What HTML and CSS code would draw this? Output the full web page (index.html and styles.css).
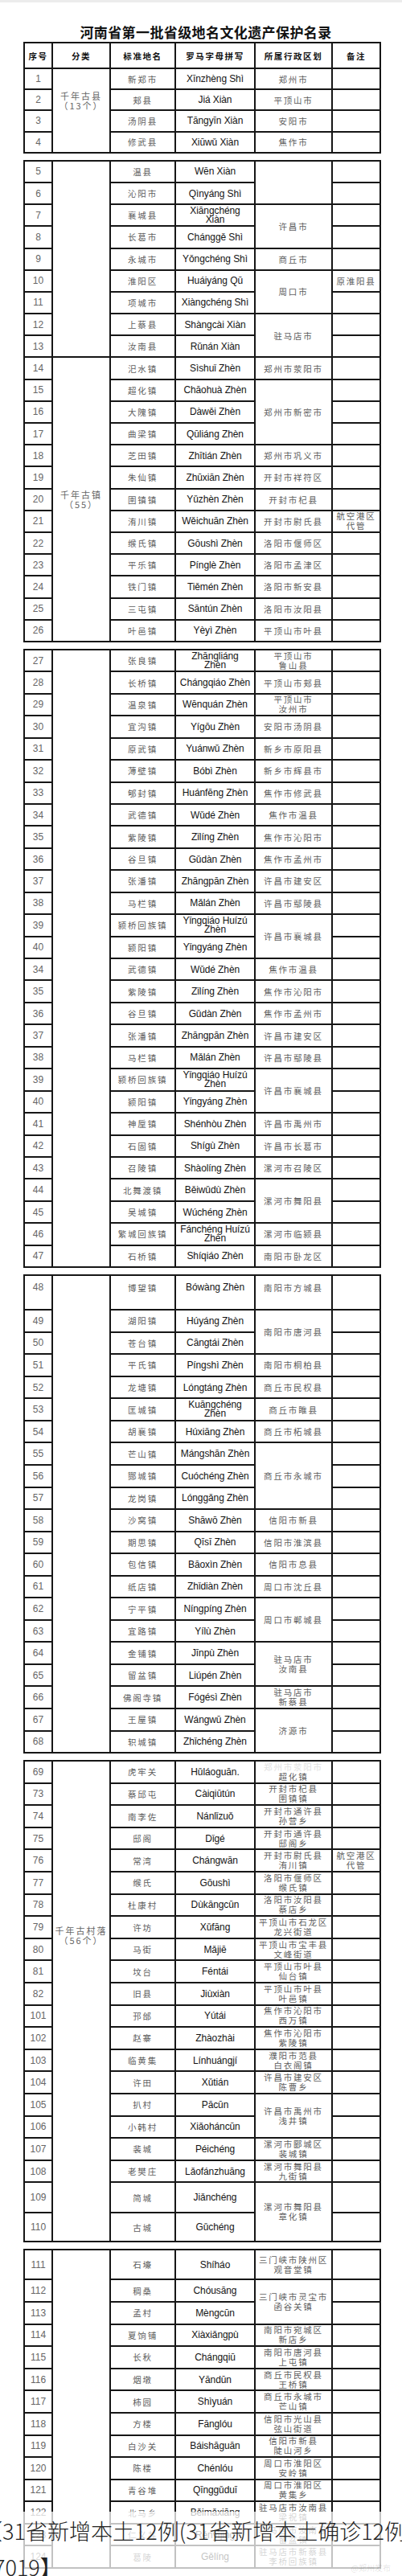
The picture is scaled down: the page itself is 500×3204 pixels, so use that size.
FILE: index.html
```html
<!DOCTYPE html>
<html lang="zh-CN">
<head>
<meta charset="utf-8">
<title>河南省第一批省级地名文化遗产保护名录</title>
<link rel="stylesheet" href="styles.css">
</head>
<body>
<div class="topbar"></div>
<h1 class="title">河南省第一批省级地名文化遗产保护名录</h1>

<table class="seg s1">
<colgroup><col class="c1"><col class="c2"><col class="c3"><col class="c4"><col class="c5"><col class="c6"></colgroup>
<tr class="head"><td>序号</td><td>分类</td><td>标准地名</td><td>罗马字母拼写</td><td>所属行政区划</td><td>备注</td></tr>
<tr><td class="n">1</td><td class="cat top1" rowspan="4">千年古县<br>（13个）</td><td class="zh">新郑市</td><td class="py">Xīnzhèng Shì</td><td class="zh">郑州市</td><td></td></tr>
<tr><td class="n">2</td><td class="zh">郏县</td><td class="py">Jiá Xiàn</td><td class="zh">平顶山市</td><td></td></tr>
<tr><td class="n">3</td><td class="zh">汤阴县</td><td class="py">Tāngyīn Xiàn</td><td class="zh">安阳市</td><td></td></tr>
<tr><td class="n">4</td><td class="zh">修武县</td><td class="py">Xiūwǔ Xiàn</td><td class="zh">焦作市</td><td></td></tr>
</table>

<table class="seg s2">
<colgroup><col class="c1"><col class="c2"><col class="c3"><col class="c4"><col class="c5"><col class="c6"></colgroup>
<tr><td class="n">5</td><td class="cat" rowspan="9"></td><td class="zh">温县</td><td class="py">Wēn Xiàn</td><td rowspan="2"></td><td></td></tr>
<tr><td class="n">6</td><td class="zh">沁阳市</td><td class="py">Qìnyáng Shì</td><td></td></tr>
<tr><td class="n">7</td><td class="zh">襄城县</td><td class="py two">Xiāngchéng<br>Xiàn</td><td class="zh" rowspan="2">许昌市</td><td></td></tr>
<tr><td class="n">8</td><td class="zh">长葛市</td><td class="py">Chánggě Shì</td><td></td></tr>
<tr><td class="n">9</td><td class="zh">永城市</td><td class="py">Yǒngchéng Shì</td><td class="zh">商丘市</td><td></td></tr>
<tr><td class="n">10</td><td class="zh">淮阳区</td><td class="py">Huáiyáng Qū</td><td class="zh" rowspan="2">周口市</td><td class="zh">原淮阳县</td></tr>
<tr><td class="n">11</td><td class="zh">项城市</td><td class="py">Xiàngchéng Shì</td><td></td></tr>
<tr><td class="n">12</td><td class="zh">上蔡县</td><td class="py">Shàngcài Xiàn</td><td class="zh" rowspan="2">驻马店市</td><td></td></tr>
<tr><td class="n">13</td><td class="zh">汝南县</td><td class="py">Rǔnán Xiàn</td><td></td></tr>
<tr><td class="n">14</td><td class="cat" rowspan="13">千年古镇<br>（55）</td><td class="zh">汜水镇</td><td class="py">Sìshuǐ Zhèn</td><td class="zh">郑州市荥阳市</td><td></td></tr>
<tr><td class="n">15</td><td class="zh">超化镇</td><td class="py">Chāohuà Zhèn</td><td class="zh" rowspan="3">郑州市新密市</td><td></td></tr>
<tr><td class="n">16</td><td class="zh">大隗镇</td><td class="py">Dàwěi Zhèn</td><td></td></tr>
<tr><td class="n">17</td><td class="zh">曲梁镇</td><td class="py">Qūliáng Zhèn</td><td></td></tr>
<tr><td class="n">18</td><td class="zh">芝田镇</td><td class="py">Zhītián Zhèn</td><td class="zh">郑州市巩义市</td><td></td></tr>
<tr><td class="n">19</td><td class="zh">朱仙镇</td><td class="py">Zhūxiān Zhèn</td><td class="zh">开封市祥符区</td><td></td></tr>
<tr><td class="n">20</td><td class="zh">圉镇镇</td><td class="py">Yǔzhèn Zhèn</td><td class="zh">开封市杞县</td><td></td></tr>
<tr><td class="n">21</td><td class="zh">洧川镇</td><td class="py">Wěichuān Zhèn</td><td class="zh">开封市尉氏县</td><td class="zh two">航空港区<br>代管</td></tr>
<tr><td class="n">22</td><td class="zh">缑氏镇</td><td class="py">Gōushì Zhèn</td><td class="zh">洛阳市偃师区</td><td></td></tr>
<tr><td class="n">23</td><td class="zh">平乐镇</td><td class="py">Pínglè Zhèn</td><td class="zh">洛阳市孟津区</td><td></td></tr>
<tr><td class="n">24</td><td class="zh">铁门镇</td><td class="py">Tiěmén Zhèn</td><td class="zh">洛阳市新安县</td><td></td></tr>
<tr><td class="n">25</td><td class="zh">三屯镇</td><td class="py">Sāntún Zhèn</td><td class="zh">洛阳市汝阳县</td><td></td></tr>
<tr><td class="n">26</td><td class="zh">叶邑镇</td><td class="py">Yèyì Zhèn</td><td class="zh">平顶山市叶县</td><td></td></tr>
</table>

<table class="seg s3">
<colgroup><col class="c1"><col class="c2"><col class="c3"><col class="c4"><col class="c5"><col class="c6"></colgroup>
<tr><td class="n">27</td><td class="cat" rowspan="28"></td><td class="zh">张良镇</td><td class="py two">Zhāngliáng<br>Zhèn</td><td class="zh two">平顶山市<br>鲁山县</td><td></td></tr>
<tr><td class="n">28</td><td class="zh">长桥镇</td><td class="py">Chángqiáo Zhèn</td><td class="zh">平顶山市郏县</td><td></td></tr>
<tr><td class="n">29</td><td class="zh">温泉镇</td><td class="py">Wēnquán Zhèn</td><td class="zh two">平顶山市<br>汝州市</td><td></td></tr>
<tr><td class="n">30</td><td class="zh">宜沟镇</td><td class="py">Yígōu Zhèn</td><td class="zh">安阳市汤阴县</td><td></td></tr>
<tr><td class="n">31</td><td class="zh">原武镇</td><td class="py">Yuánwǔ Zhèn</td><td class="zh">新乡市原阳县</td><td></td></tr>
<tr><td class="n">32</td><td class="zh">薄壁镇</td><td class="py">Bóbì Zhèn</td><td class="zh">新乡市辉县市</td><td></td></tr>
<tr><td class="n">33</td><td class="zh">郇封镇</td><td class="py">Huánfēng Zhèn</td><td class="zh">焦作市修武县</td><td></td></tr>
<tr><td class="n">34</td><td class="zh">武德镇</td><td class="py">Wǔdé Zhèn</td><td class="zh">焦作市温县</td><td></td></tr>
<tr><td class="n">35</td><td class="zh">紫陵镇</td><td class="py">Zǐlíng Zhèn</td><td class="zh">焦作市沁阳市</td><td></td></tr>
<tr><td class="n">36</td><td class="zh">谷旦镇</td><td class="py">Gǔdàn Zhèn</td><td class="zh">焦作市孟州市</td><td></td></tr>
<tr><td class="n">37</td><td class="zh">张潘镇</td><td class="py">Zhāngpān Zhèn</td><td class="zh">许昌市建安区</td><td></td></tr>
<tr><td class="n">38</td><td class="zh">马栏镇</td><td class="py">Mǎlán Zhèn</td><td class="zh">许昌市鄢陵县</td><td></td></tr>
<tr><td class="n">39</td><td class="zh">颍桥回族镇</td><td class="py two">Yǐngqiáo Huízú<br>Zhèn</td><td class="zh" rowspan="2">许昌市襄城县</td><td></td></tr>
<tr><td class="n">40</td><td class="zh">颍阳镇</td><td class="py">Yǐngyáng Zhèn</td><td></td></tr>
<tr><td class="n">34</td><td class="zh">武德镇</td><td class="py">Wǔdé Zhèn</td><td class="zh">焦作市温县</td><td></td></tr>
<tr><td class="n">35</td><td class="zh">紫陵镇</td><td class="py">Zǐlíng Zhèn</td><td class="zh">焦作市沁阳市</td><td></td></tr>
<tr><td class="n">36</td><td class="zh">谷旦镇</td><td class="py">Gǔdàn Zhèn</td><td class="zh">焦作市孟州市</td><td></td></tr>
<tr><td class="n">37</td><td class="zh">张潘镇</td><td class="py">Zhāngpān Zhèn</td><td class="zh">许昌市建安区</td><td></td></tr>
<tr><td class="n">38</td><td class="zh">马栏镇</td><td class="py">Mǎlán Zhèn</td><td class="zh">许昌市鄢陵县</td><td></td></tr>
<tr><td class="n">39</td><td class="zh">颍桥回族镇</td><td class="py two">Yǐngqiáo Huízú<br>Zhèn</td><td class="zh" rowspan="2">许昌市襄城县</td><td></td></tr>
<tr><td class="n">40</td><td class="zh">颍阳镇</td><td class="py">Yǐngyáng Zhèn</td><td></td></tr>
<tr><td class="n">41</td><td class="zh">神垕镇</td><td class="py">Shénhòu Zhèn</td><td class="zh">许昌市禹州市</td><td></td></tr>
<tr><td class="n">42</td><td class="zh">石固镇</td><td class="py">Shígù Zhèn</td><td class="zh">许昌市长葛市</td><td></td></tr>
<tr><td class="n">43</td><td class="zh">召陵镇</td><td class="py">Shàolíng Zhèn</td><td class="zh">漯河市召陵区</td><td></td></tr>
<tr><td class="n">44</td><td class="zh">北舞渡镇</td><td class="py">Běiwǔdù Zhèn</td><td class="zh" rowspan="2">漯河市舞阳县</td><td></td></tr>
<tr><td class="n">45</td><td class="zh">吴城镇</td><td class="py">Wúchéng Zhèn</td><td></td></tr>
<tr><td class="n">46</td><td class="zh">繁城回族镇</td><td class="py two">Fánchéng Huízú<br>Zhèn</td><td class="zh">漯河市临颍县</td><td></td></tr>
<tr><td class="n">47</td><td class="zh">石桥镇</td><td class="py">Shíqiáo Zhèn</td><td class="zh">南阳市卧龙区</td><td></td></tr>
</table>

<table class="seg s4">
<colgroup><col class="c1"><col class="c2"><col class="c3"><col class="c4"><col class="c5"><col class="c6"></colgroup>
<tr class="tall48"><td class="n up">48</td><td class="cat" rowspan="21"></td><td class="zh up">博望镇</td><td class="py up">Bówàng Zhèn</td><td class="zh up">南阳市方城县</td><td></td></tr>
<tr><td class="n">49</td><td class="zh">湖阳镇</td><td class="py">Húyáng Zhèn</td><td class="zh" rowspan="2">南阳市唐河县</td><td></td></tr>
<tr><td class="n">50</td><td class="zh">苍台镇</td><td class="py">Cāngtái Zhèn</td><td></td></tr>
<tr><td class="n">51</td><td class="zh">平氏镇</td><td class="py">Píngshì Zhèn</td><td class="zh">南阳市桐柏县</td><td></td></tr>
<tr><td class="n">52</td><td class="zh">龙塘镇</td><td class="py">Lóngtáng Zhèn</td><td class="zh">商丘市民权县</td><td></td></tr>
<tr><td class="n">53</td><td class="zh">匡城镇</td><td class="py two">Kuāngchéng<br>Zhèn</td><td class="zh">商丘市睢县</td><td></td></tr>
<tr><td class="n">54</td><td class="zh">胡襄镇</td><td class="py">Húxiāng Zhèn</td><td class="zh">商丘市柘城县</td><td></td></tr>
<tr><td class="n">55</td><td class="zh">芒山镇</td><td class="py">Mángshān Zhèn</td><td class="zh" rowspan="3">商丘市永城市</td><td></td></tr>
<tr><td class="n">56</td><td class="zh">酂城镇</td><td class="py">Cuóchéng Zhèn</td><td></td></tr>
<tr><td class="n">57</td><td class="zh">龙岗镇</td><td class="py">Lónggǎng Zhèn</td><td></td></tr>
<tr><td class="n">58</td><td class="zh">沙窝镇</td><td class="py">Shāwō Zhèn</td><td class="zh">信阳市新县</td><td></td></tr>
<tr><td class="n">59</td><td class="zh">期思镇</td><td class="py">Qīsī Zhèn</td><td class="zh">信阳市淮滨县</td><td></td></tr>
<tr><td class="n">60</td><td class="zh">包信镇</td><td class="py">Bāoxìn Zhèn</td><td class="zh">信阳市息县</td><td></td></tr>
<tr><td class="n">61</td><td class="zh">纸店镇</td><td class="py">Zhǐdiàn Zhèn</td><td class="zh">周口市沈丘县</td><td></td></tr>
<tr><td class="n">62</td><td class="zh">宁平镇</td><td class="py">Níngpíng Zhèn</td><td class="zh" rowspan="2">周口市郸城县</td><td></td></tr>
<tr><td class="n">63</td><td class="zh">宜路镇</td><td class="py">Yílù Zhèn</td><td></td></tr>
<tr><td class="n">64</td><td class="zh">金铺镇</td><td class="py">Jīnpù Zhèn</td><td class="zh two" rowspan="2">驻马店市<br>汝南县</td><td></td></tr>
<tr><td class="n">65</td><td class="zh">留盆镇</td><td class="py">Liúpén Zhèn</td><td></td></tr>
<tr><td class="n">66</td><td class="zh">佛阁寺镇</td><td class="py">Fógésì Zhèn</td><td class="zh two">驻马店市<br>新蔡县</td><td></td></tr>
<tr><td class="n">67</td><td class="zh">王屋镇</td><td class="py">Wángwū Zhèn</td><td class="zh" rowspan="2">济源市</td><td></td></tr>
<tr><td class="n">68</td><td class="zh">轵城镇</td><td class="py">Zhǐchéng Zhèn</td><td></td></tr>
</table>

<table class="seg s5">
<colgroup><col class="c1"><col class="c2"><col class="c3"><col class="c4"><col class="c5"><col class="c6"></colgroup>
<tr><td class="n">69</td><td class="cat vil" rowspan="21">千年古村落<br>（56个）</td><td class="zh">虎牢关</td><td class="py">Hǔláoguān.</td><td class="zh two"><span class="faint">郑州市荥阳市</span><br>超化镇</td><td></td></tr>
<tr><td class="n">73</td><td class="zh">蔡邱屯</td><td class="py">Càiqiūtún</td><td class="zh two">开封市杞县<br>圉镇镇</td><td></td></tr>
<tr><td class="n">74</td><td class="zh">南李佐</td><td class="py">Nánlǐzuǒ</td><td class="zh two">开封市通许县<br>孙营乡</td><td></td></tr>
<tr><td class="n">75</td><td class="zh">邸阁</td><td class="py">Dǐgé</td><td class="zh two">开封市通许县<br>邸阁乡</td><td></td></tr>
<tr><td class="n">76</td><td class="zh">常湾</td><td class="py">Chángwān</td><td class="zh two">开封市尉氏县<br>洧川镇</td><td class="zh two">航空港区<br>代管</td></tr>
<tr><td class="n">77</td><td class="zh">缑氏</td><td class="py">Gōushì</td><td class="zh two">洛阳市偃师区<br>缑氏镇</td><td></td></tr>
<tr><td class="n">78</td><td class="zh">杜康村</td><td class="py">Dùkāngcūn</td><td class="zh two">洛阳市汝阳县<br>蔡店乡</td><td></td></tr>
<tr><td class="n">79</td><td class="zh">许坊</td><td class="py">Xǔfāng</td><td class="zh two">平顶山市石龙区<br>龙兴街道</td><td></td></tr>
<tr><td class="n">80</td><td class="zh">马街</td><td class="py">Mǎjiē</td><td class="zh two">平顶山市宝丰县<br>文峰街道</td><td></td></tr>
<tr><td class="n">81</td><td class="zh">坟台</td><td class="py">Féntái</td><td class="zh two">平顶山市叶县<br>仙台镇</td><td></td></tr>
<tr><td class="n">82</td><td class="zh">旧县</td><td class="py">Jiùxiàn</td><td class="zh two">平顶山市叶县<br>叶邑镇</td><td></td></tr>
<tr><td class="n">101</td><td class="zh">邘邰</td><td class="py">Yútái</td><td class="zh two">焦作市沁阳市<br>西万镇</td><td></td></tr>
<tr><td class="n">102</td><td class="zh">赵寨</td><td class="py">Zhàozhài</td><td class="zh two">焦作市沁阳市<br>紫陵镇</td><td></td></tr>
<tr><td class="n">103</td><td class="zh">临黄集</td><td class="py">Línhuángjí</td><td class="zh two">濮阳市范县<br>白衣阁镇</td><td></td></tr>
<tr><td class="n">104</td><td class="zh">许田</td><td class="py">Xǔtián</td><td class="zh two">许昌市建安区<br>陈曹乡</td><td></td></tr>
<tr><td class="n">105</td><td class="zh">扒村</td><td class="py">Pācūn</td><td class="zh two" rowspan="2">许昌市禹州市<br>浅井镇</td><td></td></tr>
<tr><td class="n">106</td><td class="zh">小韩村</td><td class="py">Xiǎoháncūn</td><td></td></tr>
<tr><td class="n">107</td><td class="zh">裴城</td><td class="py">Péichéng</td><td class="zh two">漯河市郾城区<br>裴城镇</td><td></td></tr>
<tr><td class="n">108</td><td class="zh">老樊庄</td><td class="py">Lǎofánzhuāng</td><td class="zh two">漯河市舞阳县<br>九街镇</td><td></td></tr>
<tr class="tall109"><td class="n">109</td><td class="zh">简城</td><td class="py">Jiǎnchéng</td><td class="zh two" rowspan="2">漯河市舞阳县<br>章化镇</td><td></td></tr>
<tr class="tall110"><td class="n">110</td><td class="zh">古城</td><td class="py">Gǔchéng</td><td></td></tr>
</table>

<table class="seg s6">
<colgroup><col class="c1"><col class="c2"><col class="c3"><col class="c4"><col class="c5"><col class="c6"></colgroup>
<tr class="tall111"><td class="n">111</td><td class="cat" rowspan="14"></td><td class="zh">石壕</td><td class="py">Shíháo</td><td class="zh two">三门峡市陕州区<br>观音堂镇</td><td></td></tr>
<tr><td class="n">112</td><td class="zh">稠桑</td><td class="py">Chóusāng</td><td class="zh two" rowspan="2">三门峡市灵宝市<br>函谷关镇</td><td></td></tr>
<tr><td class="n">113</td><td class="zh">孟村</td><td class="py">Mèngcūn</td><td></td></tr>
<tr><td class="n">114</td><td class="zh">夏饷铺</td><td class="py">Xiàxiǎngpù</td><td class="zh two">南阳市宛城区<br>新店乡</td><td></td></tr>
<tr><td class="n">115</td><td class="zh">长秋</td><td class="py">Chángqiū</td><td class="zh two">南阳市唐河县<br>上屯镇</td><td></td></tr>
<tr><td class="n">116</td><td class="zh">烟墩</td><td class="py">Yāndūn</td><td class="zh two">商丘市民权县<br>王桥镇</td><td></td></tr>
<tr><td class="n">117</td><td class="zh">柿园</td><td class="py">Shìyuán</td><td class="zh two">商丘市永城市<br>芒山镇</td><td></td></tr>
<tr><td class="n">118</td><td class="zh">方楼</td><td class="py">Fānglóu</td><td class="zh two">信阳市光山县<br>弦山街道</td><td></td></tr>
<tr><td class="n">119</td><td class="zh">白沙关</td><td class="py">Báishāguān</td><td class="zh two">信阳市新县<br>陡山河乡</td><td></td></tr>
<tr><td class="n">120</td><td class="zh">陈楼</td><td class="py">Chénlóu</td><td class="zh two">周口市淮阳区<br>安岭镇</td><td></td></tr>
<tr><td class="n">121</td><td class="zh">青谷堆</td><td class="py">Qīnggǔduī</td><td class="zh two">周口市淮阳区<br>黄集乡</td><td></td></tr>
<tr><td class="n">122</td><td class="zh">北马乡</td><td class="py">Běimǎxiāng</td><td class="zh two">驻马店市汝南县<br>梁祝镇</td><td></td></tr>
<tr><td class="n">123</td><td class="zh">仁义井</td><td class="py">Rényìjǐng</td><td class="zh two">驻马店市汝南县<br>留盆镇</td><td></td></tr>
<tr><td class="n">124</td><td class="zh">葛陵</td><td class="py">Gělíng</td><td class="zh two">驻马店市新蔡县<br>李桥回族镇</td><td></td></tr>
</table>

<div class="caption">
  <div class="cap-line1">【31省新增本土12例(31省新增本土确诊12例</div>
  <div class="cap-line2">7019】</div>
  <div class="watermark">@郑州发布</div>
</div>
</body>
</html>
```

FILE: styles.css
```css
* { box-sizing: border-box; }
html, body { margin: 0; padding: 0; background: #fff; }
body {
  width: 500px;
  height: 3204px;
  position: relative;
  overflow: hidden;
  font-family: "Noto Sans CJK SC", "Liberation Sans", sans-serif;
  color: #222;
}
.topbar { height: 3px; background: #ececec; }
.title {
  margin: 26px 0 0;
  padding-left: 12px;
  height: 23px;
  line-height: 22px;
  text-align: center;
  font-size: 17px;
  font-weight: 700;
  letter-spacing: 0.4px;
  color: #111;
}
.seg {
  width: 443px;
  margin: 8px 0 0 29px;
  border-collapse: collapse;
  table-layout: fixed;
}
.seg.s1 { margin-top: 0; }
.c1 { width: 35px; }
.c2 { width: 72px; }
.c3 { width: 81px; }
.c4 { width: 99px; }
.c5 { width: 96px; }
.c6 { width: 60px; }
.seg td {
  border: 2px solid #161616;
  padding: 0;
  text-align: center;
  vertical-align: middle;
  height: 27.2px;
  overflow: hidden;
}
.s1 td { height: 26.2px; }
.s1 tr.head td {
  height: 32px;
  font-size: 10.5px;
  font-weight: 700;
  letter-spacing: 1.6px;
  color: #111;
}
.s3 td { height: 27.45px; }
.s4 td { height: 27.55px; }
.s5 td, .s6 td { height: 27.6px; }
.s4 tr.tall48 td { height: 43px; }
.s5 tr.tall109 td { height: 38px; }
.s5 tr.tall110 td { height: 36px; }
.s6 tr.tall111 td { height: 37px; }
.seg td.up { vertical-align: top; padding-top: 7px; }

.n {
  font-family: "Liberation Sans", sans-serif;
  font-size: 12px;
  color: #666;
}
.zh {
  font-size: 10.5px;
  letter-spacing: 1.8px;
  color: #5e5e5e;
  white-space: nowrap;
}
.zh.two { line-height: 12px; }
.py {
  font-family: "Liberation Sans", sans-serif;
  font-size: 12px;
  color: #141414;
  white-space: nowrap;
  letter-spacing: -0.1px;
}
.py.two { line-height: 11px; }
.cat {
  font-size: 11px;
  letter-spacing: 2px;
  color: #666;
  line-height: 12px;
}
.cat.top1 { vertical-align: top; padding-top: 27px; }
.cat.vil { vertical-align: top; padding-top: 204px; }
.faint { color: #e2e2e2; }

.caption {
  position: absolute;
  left: 0;
  top: 3124px;
  width: 500px;
  height: 80px;
  background: rgba(255, 255, 255, 0.74);
  overflow: hidden;
}
.cap-line1 {
  position: absolute;
  left: -24px;
  top: 4px;
  white-space: nowrap;
  font-size: 27px;
  font-weight: 300;
  line-height: 40px;
  color: #222;
}
.cap-line2 {
  position: absolute;
  left: -8px;
  top: 49px;
  white-space: nowrap;
  font-size: 27px;
  font-weight: 300;
  line-height: 40px;
  color: #222;
}
.watermark {
  position: absolute;
  right: 14px;
  top: 62px;
  font-size: 10px;
  color: rgba(0, 0, 0, 0.12);
}
```
